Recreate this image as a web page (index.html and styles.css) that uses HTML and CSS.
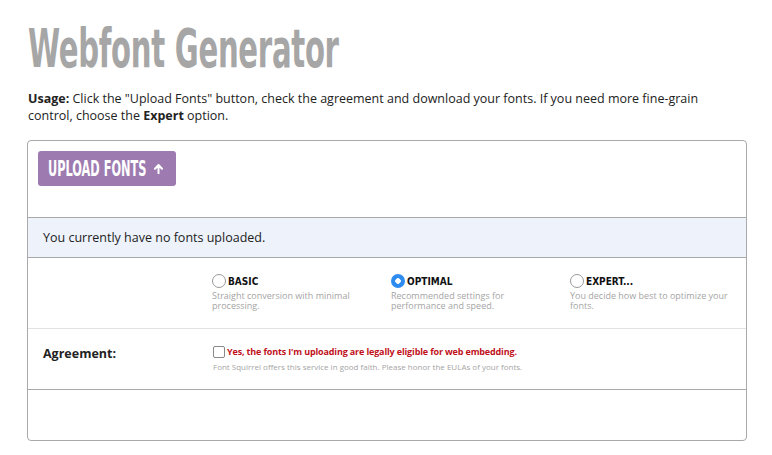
FILE: index.html
```html
<!DOCTYPE html>
<html>
<head>
<meta charset="utf-8">
<link rel="stylesheet" href="styles.css">
</head>
<body>
<h1 class="title"><span class="title-text">Webfont Generator</span></h1>
<p class="usage"><b>Usage:</b> Click the "Upload Fonts" button, check the agreement and download your fonts. If you need more fine-grain control, choose the <b>Expert</b> option.</p>
<div class="panel">
  <div class="upload-row">
    <button class="upload-btn"><span class="btn-text">UPLOAD FONTS</span><svg class="arrow" width="9" height="10" viewBox="0 0 9 10"><path d="M4.5 1 L1 4.8 M4.5 1 L8 4.8 M4.5 1.5 V9.5" stroke="#fff" stroke-width="2" fill="none" stroke-linecap="round"/></svg></button>
  </div>
  <div class="status">You currently have no fonts uploaded.</div>
  <div class="options">
    <div class="opt">
      <div class="opt-head"><span class="radio"></span><span class="opt-label">BASIC</span></div>
      <div class="opt-desc">Straight conversion with minimal processing.</div>
    </div>
    <div class="opt">
      <div class="opt-head"><span class="radio on"></span><span class="opt-label">OPTIMAL</span></div>
      <div class="opt-desc">Recommended settings for performance and speed.</div>
    </div>
    <div class="opt">
      <div class="opt-head"><span class="radio"></span><span class="opt-label">EXPERT...</span></div>
      <div class="opt-desc">You decide how best to optimize your fonts.</div>
    </div>
  </div>
  <div class="agree">
    <div class="agree-label">Agreement:</div>
    <div class="agree-body">
      <div class="agree-head"><span class="check"></span><span class="agree-text">Yes, the fonts I'm uploading are legally eligible for web embedding.</span></div>
      <div class="agree-desc">Font Squirrel offers this service in good faith. Please honor the EULAs of your fonts.</div>
    </div>
  </div>
  <div class="footer"></div>
</div>
</body>
</html>
```
FILE: styles.css
```css
* { box-sizing: border-box; }
html, body { margin: 0; padding: 0; background: #fff; }
body {
  padding: 18px 25px 0 28px;
  font-family: "Open Sans", "Noto Sans", sans-serif;
  color: #222;
}
.title {
  margin: 0;
  height: 62px;
  font-family: "DejaVu Sans Condensed", "DejaVu Sans", sans-serif;
  font-weight: bold;
  font-size: 54px;
  line-height: 62px;
  color: #a6a6a6;
  white-space: nowrap;
}
.title-text {
  display: inline-block;
  width: 314px;
  transform: scaleX(0.6);
  transform-origin: left center;
  letter-spacing: -0.5px;
}
.usage {
  margin: 10px 0 0 0;
  max-width: 700px;
  font-size: 12.5px;
  line-height: 17px;
  color: #222;
}
.panel {
  margin-top: 16px;
  margin-left: -1px;
  width: 720px;
  height: 301px;
  border: 1px solid #a9a9a9;
  border-radius: 4px;
  display: flex;
  flex-direction: column;
}
.upload-row {
  height: 77px;
  padding: 10px 0 0 10px;
  border-bottom: 1px solid #a9a9a9;
}
.upload-btn {
  width: 138px;
  height: 35px;
  padding: 0 0 0 10px;
  border: 0;
  border-radius: 3px;
  background: #9d7bb0;
  color: #fff;
  font-family: "DejaVu Sans Condensed", "DejaVu Sans", sans-serif;
  font-size: 21px;
  font-weight: bold;
  display: flex;
  align-items: center;
  white-space: nowrap;
}
.btn-text {
  display: inline-block;
  width: 98px;
  transform: scaleX(0.6);
  transform-origin: left center;
  text-align: left;
}
.arrow { margin-left: 8px; }
.status {
  height: 40px;
  background: #edf2fb;
  border-bottom: 1px solid #a9a9a9;
  padding-left: 15px;
  display: flex;
  align-items: center;
  font-size: 12.5px;
  color: #222;
}
.options {
  height: 71px;
  border-bottom: 1px solid #e2e2e2;
  padding: 16px 0 0 184px;
  display: grid;
  grid-template-columns: 179px 179px 170px;
}
.opt-head { display: flex; align-items: center; gap: 2px; }
.radio {
  width: 14px; height: 14px;
  border: 1px solid #9a9a9a;
  border-radius: 50%;
  background: #fff;
}
.radio.on {
  border: 0;
  background: radial-gradient(circle, #fff 0 2.5px, #2e8cf0 3px);
}
.opt-label {
  font-family: "DejaVu Sans Condensed", "DejaVu Sans", sans-serif;
  font-size: 10px;
  font-weight: bold;
  color: #111;
}
.opt-desc {
  margin-top: 3px;
  font-size: 9px;
  line-height: 10px;
  color: #a5a5a5;
  width: 165px;
}
.agree {
  height: 61px;
  border-bottom: 1px solid #a9a9a9;
  display: flex;
  padding: 16px 0 0 15px;
}
.agree-label {
  width: 170px;
  font-size: 12.5px;
  font-weight: bold;
  color: #222;
}
.agree-head { display: flex; align-items: center; gap: 2px; }
.check {
  width: 12px; height: 12px;
  border: 1px solid #888;
  border-radius: 2px;
}
.agree-text {
  font-size: 9px;
  font-weight: bold;
  letter-spacing: -0.15px;
  color: #c0111b;
}
.agree-desc {
  margin-top: 3px;
  font-size: 8px;
  color: #a5a5a5;
}
.footer { flex: 1; }
```
